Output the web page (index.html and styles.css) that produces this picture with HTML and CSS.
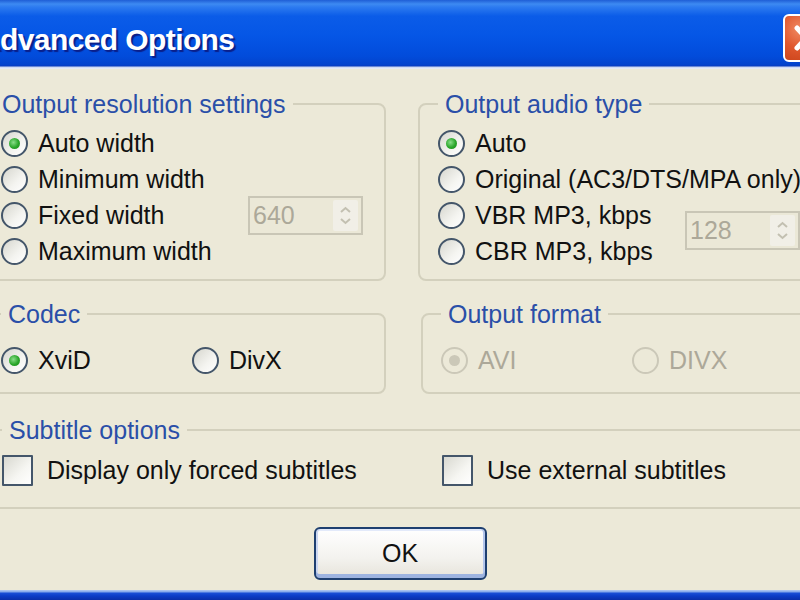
FILE: index.html
```html
<!DOCTYPE html>
<html lang="en">
  <head>
    <meta charset="UTF-8" />
    <title>Advanced Options</title>
    <link rel="stylesheet" href="styles.css">
  </head>
  <body>
    <div class="window">
      <div class="titlebar">
        <span class="title">Advanced Options</span>
        <span class="close">
          <svg width="40" height="40" viewBox="0 0 40 40">
            <path d="M11 10 L29 30 M29 10 L11 30" stroke="#fff" stroke-width="5" stroke-linecap="round" />
          </svg>
        </span>
      </div>

      <div class="client">
        <div class="row row-top">
          <fieldset class="group group-left group-first">
            <legend>Output resolution settings</legend>
            <div class="choices">
              <div class="opt wide"><span class="radio checked"></span>Auto width</div>
              <div class="opt wide"><span class="radio"></span>Minimum width</div>
              <div class="opt"><span class="radio"></span>Fixed width</div>
              <div class="spin">
                <span>640</span>
                <span class="spin-btn">
                  <svg width="25" height="31" viewBox="0 0 25 31">
                    <path d="M8 12 L12.5 8 L17 12 M8 19 L12.5 23 L17 19" fill="none" stroke="#c3c0b1" stroke-width="2" />
                  </svg>
                </span>
              </div>
              <div class="opt wide"><span class="radio"></span>Maximum width</div>
            </div>
          </fieldset>

          <fieldset class="group group-right">
            <legend>Output audio type</legend>
            <div class="choices">
              <div class="opt wide"><span class="radio checked"></span>Auto</div>
              <div class="opt wide"><span class="radio"></span>Original (AC3/DTS/MPA only)</div>
              <div class="opt"><span class="radio"></span>VBR MP3, kbps</div>
              <div class="spin spin-tall">
                <span>128</span>
                <span class="spin-btn">
                  <svg width="25" height="31" viewBox="0 0 25 31">
                    <path d="M8 12 L12.5 8 L17 12 M8 19 L12.5 23 L17 19" fill="none" stroke="#c3c0b1" stroke-width="2" />
                  </svg>
                </span>
              </div>
              <div class="opt"><span class="radio"></span>CBR MP3, kbps</div>
            </div>
          </fieldset>
        </div>

        <div class="row row-mid">
          <fieldset class="group group-left group-short">
            <legend>Codec</legend>
            <div class="pair">
              <div class="opt"><span class="radio checked"></span>XviD</div>
              <div class="opt"><span class="radio"></span>DivX</div>
            </div>
          </fieldset>

          <fieldset class="group group-right group-short disabled">
            <legend>Output format</legend>
            <div class="pair">
              <div class="opt"><span class="radio checked"></span>AVI</div>
              <div class="opt"><span class="radio"></span>DIVX</div>
            </div>
          </fieldset>
        </div>

        <div class="row row-sub">
          <fieldset class="group group-full">
            <legend>Subtitle options</legend>
            <div class="pair pair-wide">
              <div class="opt"><span class="check"></span>Display only forced subtitles</div>
              <div class="opt"><span class="check"></span>Use external subtitles</div>
            </div>
          </fieldset>
        </div>

        <div class="actions">
          <button class="button">OK</button>
        </div>
      </div>

      <div class="frame-bottom"></div>
    </div>
  </body>
</html>
```

FILE: styles.css
```css
html,
body {
  margin: 0;
  padding: 0;
}

body {
  width: 800px;
  height: 600px;
  overflow: hidden;
  background: #ece9d8;
  font-family: "Liberation Sans", Arial, sans-serif;
  font-size: 25px;
  color: #111;
}

.window {
  width: 848px;
  height: 600px;
  margin-left: -24px;
  display: flex;
  flex-direction: column;
}

/* title bar */
.titlebar {
  flex: none;
  height: 69px;
  display: flex;
  justify-content: space-between;
  align-items: flex-start;
  background: linear-gradient(
    to bottom,
    #1f5ed6 0px,
    #3d8af2 4px,
    #2d7bf0 7px,
    #0b5ce8 16px,
    #0556e6 36px,
    #024cdb 56px,
    #0342cc 65px,
    #0a3bbd 66px,
    #c9d6f2 67px,
    #eef0f6 69px
  );
}

.title {
  margin: 23px 0 0 3px;
  font-weight: bold;
  font-size: 30px;
  line-height: 34px;
  letter-spacing: -0.6px;
  color: #fff;
  text-shadow: 2px 2px 1px #0a1f8a;
}

.close {
  margin: 14px -5px 0 0;
  width: 42px;
  height: 44px;
  border: 2px solid #fff;
  border-radius: 6px;
  background: radial-gradient(circle at 35% 30%, #f08a63, #e0582e 45%, #c43d14);
  display: flex;
  align-items: center;
  justify-content: center;
}

/* client area */
.client {
  flex: 1;
  background: #ece9d8;
  padding: 21px 5px 10px;
  display: flex;
  flex-direction: column;
}

.row {
  display: flex;
  gap: 32px;
}

.row-mid {
  margin-top: 19px;
  gap: 35px;
}

.row-sub {
  margin-top: 22px;
}

.group {
  margin: 0;
  min-width: 0;
  padding: 7px 18px 10px;
  border: 2px solid #d3d0bd;
  border-radius: 8px;
  box-sizing: border-box;
}

.group legend {
  padding: 0 7px;
  line-height: 28px;
  color: #2a4fa8;
}

.group-first legend {
  margin-left: -6px;
}

.group-left {
  flex: none;
  width: 405px;
}

.group-right {
  flex: 1;
}

.group-short {
  padding: 14px 18px 14px;
}

.group-full {
  flex: 1;
  padding: 8px 19px 19px;
}

.choices {
  display: grid;
  grid-template-columns: 247px auto;
  grid-auto-rows: 36px;
  align-items: center;
}

.pair {
  display: grid;
  grid-template-columns: 191px auto;
  grid-auto-rows: 36px;
  align-items: center;
}

.pair-wide {
  grid-template-columns: 440px auto;
}

.opt {
  display: flex;
  align-items: center;
  white-space: nowrap;
}

.wide {
  grid-column: 1 / -1;
}

.radio {
  flex: none;
  width: 27px;
  height: 27px;
  margin-right: 10px;
  box-sizing: border-box;
  border: 2px solid #44566a;
  border-radius: 50%;
  background: linear-gradient(135deg, #d6d6ce, #f4f4f0 60%, #fff);
  display: flex;
  align-items: center;
  justify-content: center;
}

.radio.checked::after {
  content: "";
  width: 11px;
  height: 11px;
  border-radius: 50%;
  background: radial-gradient(circle at 40% 40%, #8ade8a, #2aa62a 55%, #1a8a1a);
}

.check {
  flex: none;
  width: 31px;
  height: 31px;
  margin-right: 14px;
  box-sizing: border-box;
  border: 2px solid #44566a;
  border-radius: 1px;
  background: linear-gradient(135deg, #d8d8d0, #f6f6f2 60%, #fff);
}

.disabled .opt {
  color: #aca899;
}

.disabled .radio {
  border-color: #cbc8b8;
  background: #ece9d8;
}

.disabled .radio.checked::after {
  background: #cbc8b8;
}

/* spinners */
.spin {
  width: 115px;
  height: 39px;
  box-sizing: border-box;
  border: 2px solid #c9c6b6;
  background: #ebe8d7;
  padding: 0 3px 0 3px;
  display: flex;
  align-items: center;
  justify-content: space-between;
  color: #aca899;
}

.spin-tall {
  grid-row: span 2;
  align-self: start;
  margin-top: 14px;
}

.spin-btn {
  width: 25px;
  height: 31px;
  background: #f1efe7;
  border-radius: 2px;
  display: flex;
}

/* button */
.actions {
  display: flex;
  justify-content: center;
  margin-top: 18px;
}

.button {
  width: 173px;
  height: 53px;
  box-sizing: border-box;
  border: 2px solid #1e3f70;
  border-radius: 6px;
  background: linear-gradient(to bottom, #ffffff, #f3f2ee 60%, #e6e3da);
  box-shadow: inset 0 -4px 0 #9db3e0, inset 2px 0 0 #cbd7f1, inset -2px 0 0 #b4c6ec, inset 0 2px 0 #e3eafa;
  font-family: inherit;
  font-size: 25px;
  color: #111;
  padding: 0;
}

.frame-bottom {
  flex: none;
  height: 10px;
  background: linear-gradient(to bottom, #b4cbf2 0px, #7ea3ea 2px, #1a4fd6 3px, #0b3cc6 6px, #0a2fa8 10px);
}
```
